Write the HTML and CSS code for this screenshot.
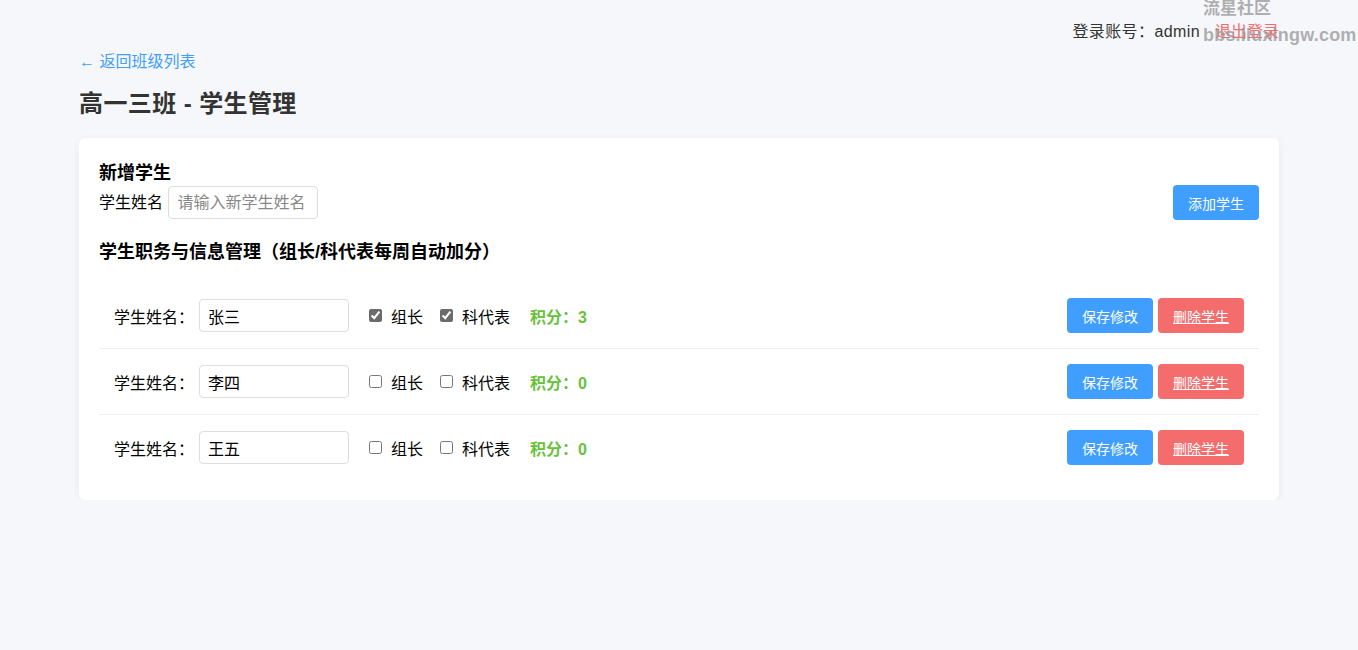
FILE: index.html
```html
<!DOCTYPE html>
<html>
<head>
    <meta charset="utf-8">
    <title>学生管理</title>
    <link rel="stylesheet" href="styles.css">
</head>
<body>
    <div class="topbar">
        <span class="user">登录账号：admin</span>
        <a href="javascript:;" class="logout">退出登录</a>
    </div>
    <div class="wrap">
        <a href="javascript:;" class="back">← 返回班级列表</a>
        <h2 class="title">高一三班 - 学生管理</h2>
        <div class="card">
            <h3>新增学生</h3>
            <div class="add-row">
                <label>学生姓名 <input type="text" class="textField" placeholder="请输入新学生姓名"></label>
                <button class="btn btn-primary">添加学生</button>
            </div>
            <h3 class="sub">学生职务与信息管理（组长/科代表每周自动加分）</h3>
            <ul class="stu-list">
                <li class="stu">
                    <span class="lbl">学生姓名：</span>
                    <input type="text" class="textField" value="张三">
                    <label class="chk"><input type="checkbox" checked> 组长</label>
                    <label class="chk"><input type="checkbox" checked> 科代表</label>
                    <span class="score">积分：3</span>
                    <span class="ops">
                        <button class="btn btn-primary">保存修改</button>
                        <button class="btn btn-danger">删除学生</button>
                    </span>
                </li>
                <li class="stu">
                    <span class="lbl">学生姓名：</span>
                    <input type="text" class="textField" value="李四">
                    <label class="chk"><input type="checkbox"> 组长</label>
                    <label class="chk"><input type="checkbox"> 科代表</label>
                    <span class="score">积分：0</span>
                    <span class="ops">
                        <button class="btn btn-primary">保存修改</button>
                        <button class="btn btn-danger">删除学生</button>
                    </span>
                </li>
                <li class="stu">
                    <span class="lbl">学生姓名：</span>
                    <input type="text" class="textField" value="王五">
                    <label class="chk"><input type="checkbox"> 组长</label>
                    <label class="chk"><input type="checkbox"> 科代表</label>
                    <span class="score">积分：0</span>
                    <span class="ops">
                        <button class="btn btn-primary">保存修改</button>
                        <button class="btn btn-danger">删除学生</button>
                    </span>
                </li>
            </ul>
        </div>
    </div>
    <div class="mark">
        <div>流星社区</div>
        <div class="mark-url">bbs.liuxingw.com</div>
    </div>
</body>
</html>
```

FILE: styles.css
```css
html, body {
    margin: 0;
    padding: 0;
}
body {
    background-color: #f5f7fa;
    font-family: "Segoe UI", "Liberation Sans", "Noto Sans CJK SC", sans-serif;
    color: #333;
    font-size: 16px;
}
ul, li {
    margin: 0;
    padding: 0;
    list-style: none;
}
.topbar {
    display: flex;
    justify-content: flex-end;
    gap: 15px;
    padding: 20px 79px 0 0;
    height: 24px;
    line-height: 24px;
}
.user {
    color: #333;
    letter-spacing: 0.4px;
}
.logout {
    color: #f56c6c;
    text-decoration: none;
}
.wrap {
    width: 1200px;
    margin: 0 auto;
}
.back {
    display: inline-block;
    margin-top: 6px;
    line-height: 24px;
    color: #409eff;
    text-decoration: none;
}
.title {
    margin: 15px 0 19px;
    font-size: 24px;
    line-height: 30px;
    letter-spacing: 0.4px;
    color: #333;
}
.card {
    background: #fff;
    border-radius: 6px;
    box-shadow: 0 2px 8px rgba(0, 0, 0, 0.06);
    padding: 23px 20px 20px;
}
.card h3 {
    margin: 0;
    font-size: 18px;
    line-height: 24px;
    color: #000;
}
.card h3.sub {
    margin: 20px 0 19px;
}
.add-row {
    display: flex;
    justify-content: space-between;
    align-items: center;
}
.add-row label {
    color: #000;
}
.textField {
    box-sizing: border-box;
    width: 150px;
    height: 33px;
    padding: 0 8px;
    border: 1px solid #ddd;
    border-radius: 4px;
    font: inherit;
    font-size: 16px;
    color: #000;
    outline: none;
}
.textField::placeholder {
    color: #888;
}
.add-row .textField {
    margin-left: 1px;
}
.btn {
    height: 35px;
    padding: 0 15px;
    border: none;
    border-radius: 4px;
    font-family: inherit;
    font-size: 14px;
    color: #fff;
    cursor: pointer;
}
.btn-primary {
    background-color: #409eff;
}
.btn-danger {
    background-color: #f56c6c;
    text-decoration: underline;
}
.stu {
    display: flex;
    align-items: center;
    height: 65px;
    padding: 0 15px;
    color: #000;
    border-bottom: 1px solid #eee;
}
.stu:last-child {
    border-bottom: none;
}
.stu .lbl {
    margin-right: 5px;
}
.chk {
    display: flex;
    align-items: center;
    margin-left: 16px;
}
.chk + .chk {
    margin-left: 13px;
}
.chk input {
    width: 13px;
    height: 13px;
    margin: 0 9px 0 4px;
    accent-color: #6b6b6b;
}
.score {
    margin-left: 20px;
    font-weight: bold;
    color: #67c23a;
}
.ops {
    margin-left: auto;
    display: flex;
    gap: 5px;
}
/* 右上角站点水印 */
.mark {
    position: absolute;
    top: -2px;
    left: 1203px;
    font-weight: bold;
    color: rgba(150, 150, 150, 0.75);
    font-size: 17px;
    line-height: 22px;
    white-space: nowrap;
}
.mark-url {
    margin-top: 4px;
    font-size: 18px;
    letter-spacing: 0.2px;
}
```
